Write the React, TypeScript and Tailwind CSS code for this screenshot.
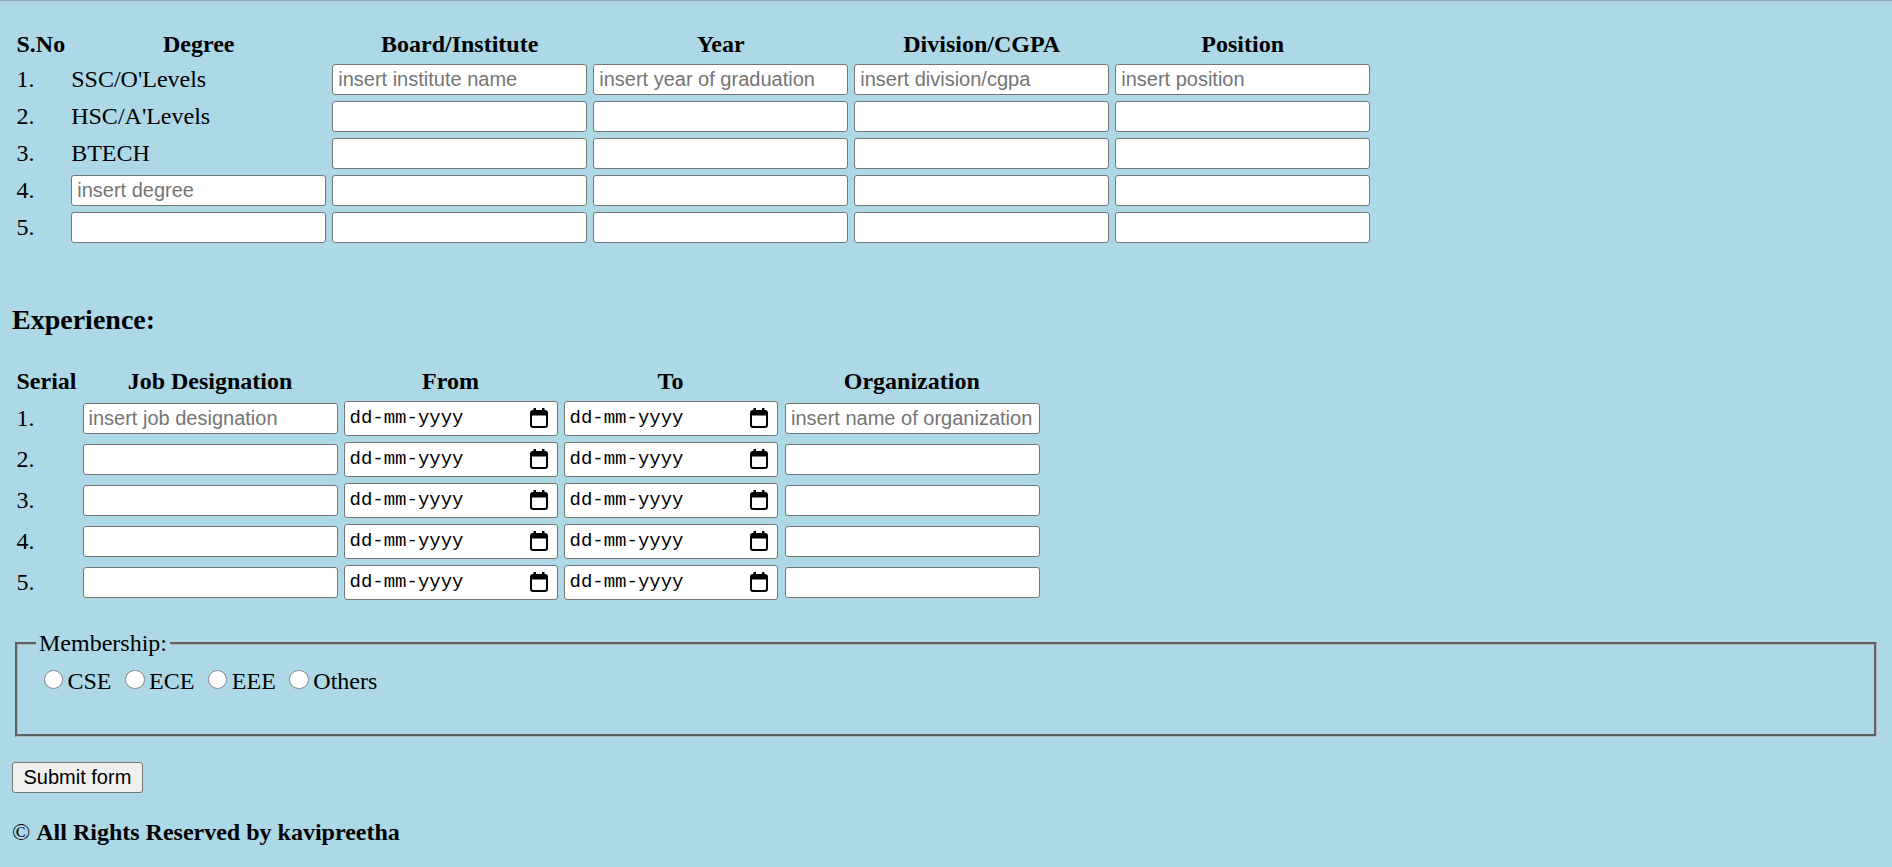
import { useState } from 'react'

const textInput =
  "w-[255px] h-[31px] bg-white border border-[#767676] rounded-[3px] pl-[5px] pr-[3px] font-['Liberation_Sans',Arial,sans-serif] text-[20px] text-black placeholder:text-[#757575] focus:outline-none"

const cell = "p-[1.5px] align-middle"
const head = "p-[1.5px] text-center font-bold align-middle"

const degreeRows: (string | null)[] = ["SSC/O'Levels", "HSC/A'Levels", 'BTECH', null, null]

const CalendarIcon = () => (
  <svg width="18" height="20" viewBox="0 0 18 20" fill="none">
    <rect x="3.5" y="0" width="2.5" height="4" fill="#000" />
    <rect x="12" y="0" width="2.5" height="4" fill="#000" />
    <rect x="1" y="3" width="16" height="16" rx="2" stroke="#000" strokeWidth="2" />
    <rect x="1" y="3" width="16" height="4.5" fill="#000" />
  </svg>
)

const DateBox = () => (
  <div className="flex items-center justify-between w-[214px] h-[35px] bg-white border border-[#767676] rounded-[3px] pl-[5px] pr-[9px]">
    <span className="font-['Liberation_Mono',monospace] text-[19px] text-black leading-none">dd-mm-yyyy</span>
    <CalendarIcon />
  </div>
)

export default function App() {
  const [member, setMember] = useState('')

  return (
    <div className="min-h-screen bg-[#add8e6] text-black font-['Liberation_Serif','Times_New_Roman',serif] text-[24px] leading-[normal]">
      <div className="h-px bg-[#8ea8b0]" />
      <form
        onSubmit={ ( e ) => e.preventDefault() }
        className="px-[12px]"
      >
        {/* education */}
        <table className="mt-[25.5px] border-separate border-spacing-[3px]">
          <tbody>
            <tr>
              <th className={ head + " text-left" }>S.No</th>
              <th className={ head }>Degree</th>
              <th className={ head }>Board/Institute</th>
              <th className={ head }>Year</th>
              <th className={ head }>Division/CGPA</th>
              <th className={ head }>Position</th>
            </tr>
            { degreeRows.map( ( deg, i ) => (
              <tr key={ i }>
                <td className={ cell }>{ i + 1 }.</td>
                <td className={ cell }>
                  { deg !== null ? deg : (
                    <input type="text" className={ textInput } placeholder={ i === 3 ? 'insert degree' : '' } />
                  ) }
                </td>
                <td className={ cell }>
                  <input type="text" className={ textInput } placeholder={ i === 0 ? 'insert institute name' : '' } />
                </td>
                <td className={ cell }>
                  <input type="text" className={ textInput } placeholder={ i === 0 ? 'insert year of graduation' : '' } />
                </td>
                <td className={ cell }>
                  <input type="text" className={ textInput } placeholder={ i === 0 ? 'insert division/cgpa' : '' } />
                </td>
                <td className={ cell }>
                  <input type="text" className={ textInput } placeholder={ i === 0 ? 'insert position' : '' } />
                </td>
              </tr>
            ) ) }
          </tbody>
        </table>

        <h3 className="mt-[56px] mb-[27.5px] text-[28px] font-bold leading-[normal]">Experience:</h3>

        <table className="border-separate border-spacing-[3px]">
          <tbody>
            <tr>
              <th className={ head + " text-left" }>Serial</th>
              <th className={ head }>Job Designation</th>
              <th className={ head }>From</th>
              <th className={ head }>To</th>
              <th className={ head }>Organization</th>
            </tr>
            { [ 1, 2, 3, 4, 5 ].map( ( n ) => (
              <tr key={ n }>
                <td className={ cell }>{ n }.</td>
                <td className={ cell }>
                  <input type="text" className={ textInput } placeholder={ n === 1 ? 'insert job designation' : '' } />
                </td>
                <td className={ cell }><DateBox /></td>
                <td className={ cell }><DateBox /></td>
                <td className={ cell + " pl-[3px]" }>
                  <input type="text" className={ textInput } placeholder={ n === 1 ? 'insert name of organization' : '' } />
                </td>
              </tr>
            ) ) }
          </tbody>
        </table>

        <fieldset className="mt-[26px] mx-[3px] border-[3px] [border-style:groove] border-[#b4b4b4] pl-[18px] pr-[18px] pt-[8px] pb-[15px]">
          <legend className="px-[3px]">Membership:</legend>
          <div className="h-[54px]">
            { [ 'CSE', 'ECE', 'EEE', 'Others' ].map( ( m, i ) => (
              <label key={ m }>
                { i > 0 ? ' ' : '' }
                <input
                  type="radio"
                  name="membership"
                  checked={ member === m }
                  onChange={ () => setMember( m ) }
                  className="appearance-none w-[19.5px] h-[19.5px] rounded-full border border-[#858585] bg-white mt-[4.5px] mr-[4.5px] ml-[7.5px] align-baseline"
                />
                { m }
              </label>
            ) ) }
          </div>
        </fieldset>

        <button
          type="submit"
          className="mt-[25px] h-[31px] px-[10.5px] bg-[#efefef] border border-[#767676] rounded-[3px] font-['Liberation_Sans',Arial,sans-serif] text-[20px] text-black"
        >Submit form</button>

        <p className="mt-[26px]">&copy; <b className="font-bold">All Rights Reserved by kavipreetha</b></p>
      </form>
    </div>
  )
}
